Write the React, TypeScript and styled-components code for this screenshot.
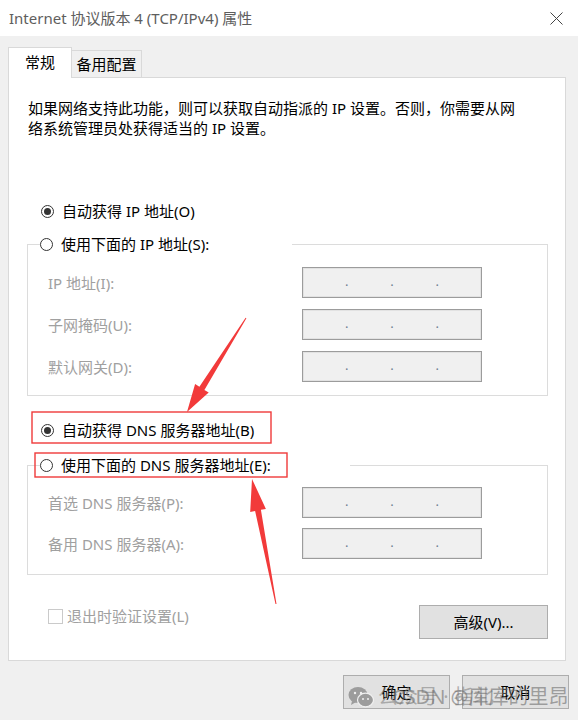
import styled, { createGlobalStyle } from 'styled-components';

const GlobalStyle = createGlobalStyle`
    html, body {
        margin: 0;
        padding: 0;
        background: #f0f0f0;
    }
    body {
        font-family: 'Noto Sans', 'Noto Sans CJK SC', sans-serif;
        font-size: 15px;
        color: #000;
    }
`;

const ipRows = [
    { label: 'IP 地址(I):' },
    { label: '子网掩码(U):' },
    { label: '默认网关(D):' },
];

const dnsRows = [
    { label: '首选 DNS 服务器(P):' },
    { label: '备用 DNS 服务器(A):' },
];

const CloseIcon = () => (
    <svg width="13" height="13" viewBox="0 0 13 13">
        <path d="M0.5 0.5 L12.5 12.5 M12.5 0.5 L0.5 12.5" stroke="#444" strokeWidth="1" />
    </svg>
);

const WeChatIcon = () => (
    <svg width="26" height="22" viewBox="0 0 26 22">
        <ellipse cx="10" cy="9" rx="9.5" ry="8" fill="#9c9c9c" />
        <path d="M4 15 L3 19 L8 16 Z" fill="#9c9c9c" />
        <ellipse cx="17.5" cy="14" rx="8" ry="6.8" fill="#9c9c9c" stroke="#f0f0f0" strokeWidth="1.2" />
        <circle cx="7" cy="7" r="1.2" fill="#f0f0f0" />
        <circle cx="13" cy="7" r="1.2" fill="#f0f0f0" />
        <circle cx="15" cy="13" r="1" fill="#f0f0f0" />
        <circle cx="20" cy="13" r="1" fill="#f0f0f0" />
    </svg>
);

const Radio = ({ checked }: { checked?: boolean }) => (
    <RadioCircle>{checked && <RadioDot />}</RadioCircle>
);

const IpField = () => (
    <IpBox>
        <span>.</span>
        <span>.</span>
        <span>.</span>
    </IpBox>
);

export default function App() {
    return (
        <Window>
            <GlobalStyle />
            <TitleBar>
                <Title>Internet 协议版本 4 (TCP/IPv4) 属性</Title>
                <CloseIcon />
            </TitleBar>
            <TabStrip>
                <Tab $active>常规</Tab>
                <Tab>备用配置</Tab>
            </TabStrip>
            <Panel>
                <Description>
                    如果网络支持此功能，则可以获取自动指派的 IP 设置。否则，你需要从网
                    <br />
                    络系统管理员处获得适当的 IP 设置。
                </Description>

                <RadioRow $gap={63}>
                    <Radio checked />
                    <span>自动获得 IP 地址(O)</span>
                </RadioRow>
                <GroupBox $gap={13}>
                    <GroupLegend $width={252}>
                        <Radio />
                        <span>使用下面的 IP 地址(S):</span>
                    </GroupLegend>
                    <FieldGrid $top={13} $bottom={13} $rowGap={11}>
                        {ipRows.map((row) => (
                            <FieldRow key={row.label}>
                                <FieldLabel>{row.label}</FieldLabel>
                                <IpField />
                            </FieldRow>
                        ))}
                    </FieldGrid>
                </GroupBox>

                <RadioRow $gap={24}>
                    <Radio checked />
                    <span>自动获得 DNS 服务器地址(B)</span>
                </RadioRow>
                <GroupBox $gap={15}>
                    <GroupLegend $width={310}>
                        <Radio />
                        <span>使用下面的 DNS 服务器地址(E):</span>
                    </GroupLegend>
                    <FieldGrid $top={12} $bottom={15} $rowGap={10}>
                        {dnsRows.map((row) => (
                            <FieldRow key={row.label}>
                                <FieldLabel>{row.label}</FieldLabel>
                                <IpField />
                            </FieldRow>
                        ))}
                    </FieldGrid>
                </GroupBox>

                <BottomRow>
                    <CheckLabel>
                        <CheckBox />
                        <span>退出时验证设置(L)</span>
                    </CheckLabel>
                    <Button $width={129}>高级(V)...</Button>
                </BottomRow>
            </Panel>
            <Footer>
                <Button $width={107}>确定</Button>
                <Button $width={107}>取消</Button>
            </Footer>

            <Annotations width="578" height="720" viewBox="0 0 578 720">
                <rect x="32" y="412" width="239" height="31" fill="none" stroke="#ef3a3a" strokeWidth="1.4" />
                <rect x="35" y="453" width="252" height="24" fill="none" stroke="#ef3a3a" strokeWidth="1.4" />
                <polygon
                    points="246.4,318.3 204.4,389.9 208.7,392.5 187,412 195.1,384.1 199.4,386.7 245.6,317.7"
                    fill="#f23a3a"
                />
                <polygon
                    points="276.5,603.9 260.9,509.8 265.9,508.9 252,479 250.2,511.9 255.1,511 275.5,604.1"
                    fill="#f23a3a"
                />
            </Annotations>
            <Watermark>
                <WeChatIcon />
                <WatermarkText>公众号 · 指北</WatermarkText>
            </Watermark>
            <WatermarkCredit>CSDN @库库的里昂</WatermarkCredit>
        </Window>
    );
}

const Window = styled.div`
    position: relative;
    width: 578px;
    height: 720px;
    overflow: hidden;
    background: #f0f0f0;
    display: flex;
    flex-direction: column;
`;

const TitleBar = styled.div`
    height: 36px;
    flex-shrink: 0;
    background: #fff;
    display: flex;
    align-items: center;
    justify-content: space-between;
    padding: 0 15px 0 9px;
`;

const Title = styled.div`
    font-size: 15px;
    line-height: 20px;
    color: #5e5e5e;
`;

const TabStrip = styled.div`
    display: flex;
    align-items: flex-end;
    margin: 11px 0 0 8px;
    height: 30px;
`;

const Tab = styled.div<{ $active?: boolean }>`
    position: relative;
    z-index: 1;
    box-sizing: border-box;
    display: flex;
    align-items: center;
    justify-content: center;
    border: 1px solid #d9d9d9;
    border-bottom: none;
    line-height: 20px;
    width: ${(p) => (p.$active ? '64px' : '70px')};
    height: ${(p) => (p.$active ? '31px' : '27px')};
    margin-bottom: ${(p) => (p.$active ? '-1px' : '0')};
    background: ${(p) => (p.$active ? '#fff' : '#f0f0f0')};
    border-left: ${(p) => (p.$active ? '1px solid #d9d9d9' : 'none')};
    padding-bottom: ${(p) => (p.$active ? '2px' : '0')};
`;

const Panel = styled.div`
    box-sizing: border-box;
    margin-left: 8px;
    width: 558px;
    height: 584px;
    flex-shrink: 0;
    background: #fff;
    border: 1px solid #d9d9d9;
    padding: 20px 17px 0 18px;
    display: flex;
    flex-direction: column;
`;

const Description = styled.div`
    margin-left: 1px;
    line-height: 20px;
    white-space: nowrap;
`;

const RadioRow = styled.div<{ $gap: number }>`
    display: flex;
    align-items: center;
    gap: 8px;
    margin-top: ${(p) => p.$gap}px;
    padding-left: 14px;
    height: 20px;
    line-height: 20px;
`;

const RadioCircle = styled.span`
    box-sizing: border-box;
    width: 13px;
    height: 13px;
    border-radius: 50%;
    border: 1px solid #333;
    background: #fff;
    display: flex;
    align-items: center;
    justify-content: center;
    flex-shrink: 0;
`;

const RadioDot = styled.span`
    width: 7px;
    height: 7px;
    border-radius: 50%;
    background: #333;
`;

const GroupBox = styled.fieldset<{ $gap: number }>`
    margin: ${(p) => p.$gap}px 0 0;
    padding: 0;
    min-width: 0;
    border: 1px solid #dcdcdc;
`;

const GroupLegend = styled.legend<{ $width: number }>`
    box-sizing: border-box;
    display: flex;
    align-items: center;
    gap: 8px;
    width: ${(p) => p.$width}px;
    margin-left: 12px;
    padding: 0;
    height: 20px;
    line-height: 20px;
    background: #fff;
`;

const FieldGrid = styled.div<{ $top: number; $bottom: number; $rowGap: number }>`
    display: flex;
    flex-direction: column;
    gap: ${(p) => p.$rowGap}px;
    padding: ${(p) => p.$top}px 0 ${(p) => p.$bottom}px 20px;
`;

const FieldRow = styled.div`
    display: grid;
    grid-template-columns: 254px 180px;
    align-items: center;
`;

const FieldLabel = styled.span`
    color: #a0a0a0;
    line-height: 20px;
`;

const IpBox = styled.div`
    box-sizing: border-box;
    width: 180px;
    height: 31px;
    background: #f0f0f0;
    border: 1px solid #9c9c9c;
    box-shadow: inset 0 0 0 1px #e2e2e2;
    display: flex;
    align-items: center;
    justify-content: space-evenly;
    color: #6f7f90;
    font-size: 13px;
    line-height: 13px;
    padding-bottom: 3px;
`;

const BottomRow = styled.div`
    display: flex;
    justify-content: space-between;
    align-items: flex-start;
    margin-top: 30px;
`;

const CheckLabel = styled.div`
    display: flex;
    align-items: center;
    gap: 4px;
    margin: 1px 0 0 21px;
    height: 20px;
    line-height: 20px;
    color: #a0a0a0;
`;

const CheckBox = styled.span`
    box-sizing: border-box;
    width: 15px;
    height: 15px;
    border: 1px solid #cacaca;
    background: #fff;
`;

const Button = styled.div<{ $width: number }>`
    box-sizing: border-box;
    width: ${(p) => p.$width}px;
    height: 34px;
    display: flex;
    align-items: center;
    justify-content: center;
    background: #e1e1e1;
    border: 1px solid #adadad;
    line-height: 20px;
`;

const Footer = styled.div`
    display: flex;
    justify-content: flex-end;
    gap: 12px;
    margin-top: 14px;
    padding-right: 9px;
`;

const Annotations = styled.svg`
    position: absolute;
    left: 0;
    top: 0;
    pointer-events: none;
    z-index: 2;
`;

const Watermark = styled.div`
    position: absolute;
    left: 348px;
    top: 684px;
    z-index: 3;
    display: flex;
    align-items: center;
    gap: 4px;
    pointer-events: none;
`;

const WatermarkText = styled.span`
    font-size: 20px;
    line-height: 26px;
    color: rgba(120, 120, 120, 0.55);
    white-space: nowrap;
`;

const WatermarkCredit = styled.span`
    position: absolute;
    left: 392px;
    top: 684px;
    z-index: 3;
    font-size: 20px;
    line-height: 26px;
    color: rgba(110, 110, 110, 0.6);
    white-space: nowrap;
    pointer-events: none;
`;
